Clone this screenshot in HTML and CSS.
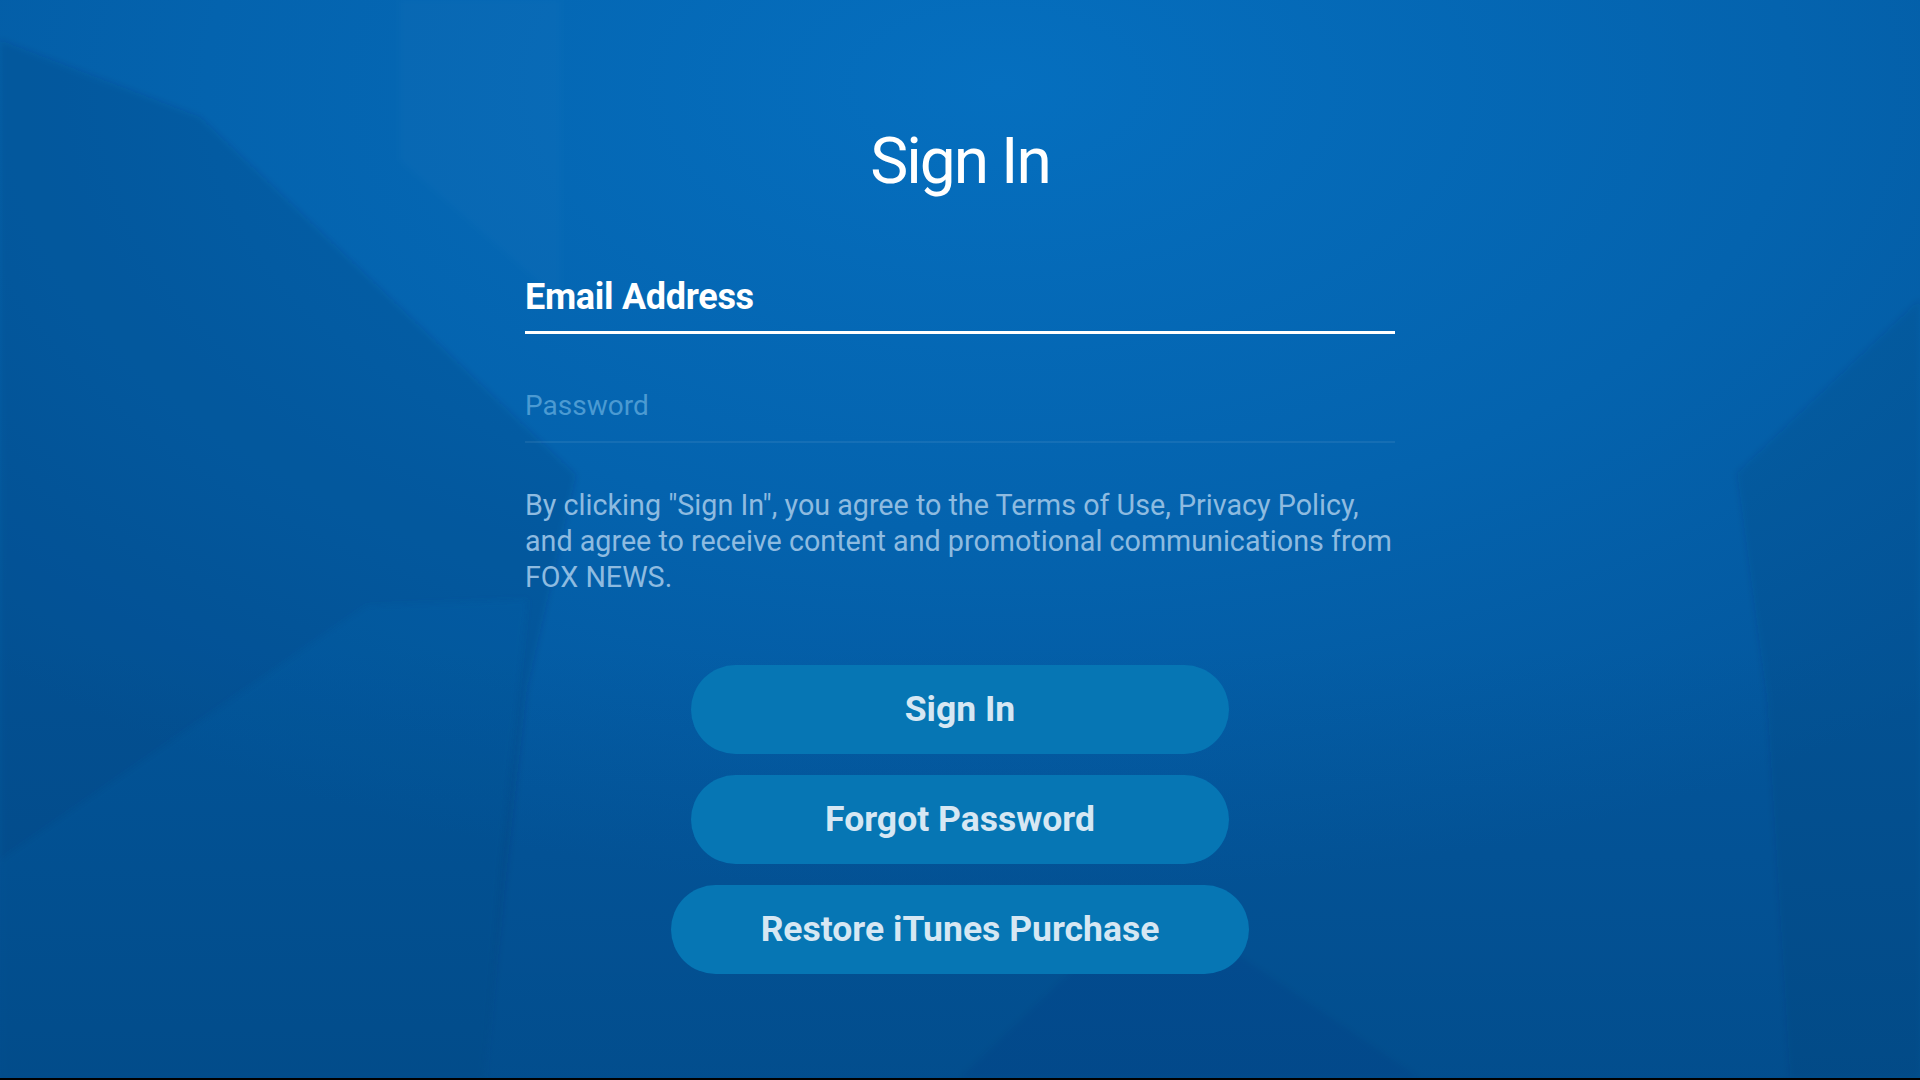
FILE: index.html
```html
<!DOCTYPE html>
<html lang="en">
<head>
<meta charset="utf-8">
<title>Sign In</title>
<link rel="stylesheet" href="styles.css">
</head>
<body>
<div class="screen">
  <svg class="backdrop" viewBox="0 0 1920 1078" preserveAspectRatio="none" aria-hidden="true">
    <defs>
      <radialGradient id="glow" cx="0.52" cy="0.08" r="0.75">
        <stop offset="0" stop-color="#056fbf"/>
        <stop offset="0.55" stop-color="#0463ae"/>
        <stop offset="1" stop-color="#03569c"/>
      </radialGradient>
      <linearGradient id="fade" x1="0" y1="0" x2="0" y2="1">
        <stop offset="0.6" stop-color="#00305a" stop-opacity="0"/>
        <stop offset="1" stop-color="#00305a" stop-opacity="0.22"/>
      </linearGradient>
      <filter id="soft" x="-5%" y="-5%" width="110%" height="110%">
        <feGaussianBlur stdDeviation="3"/>
      </filter>
    </defs>
    <rect width="1920" height="1078" fill="url(#glow)"/>
    <g filter="url(#soft)">
      <polygon points="0,40 200,117 576,475 527,689 484,1078 0,1078" fill="#002a55" fill-opacity="0.15"/>
      <polygon points="0,861 367,606 527,600 500,860 484,1078 0,1078" fill="#1a78c8" fill-opacity="0.12"/>
      <polygon points="1920,299 1737,473 1767,700 1790,1078 1920,1078" fill="#002a55" fill-opacity="0.12"/>
      <polygon points="1150,895 1420,1078 960,1078" fill="#002a55" fill-opacity="0.07"/>
      <polygon points="400,0 560,0 560,300 400,160" fill="#ffffff" fill-opacity="0.015"/>
    </g>
    <rect width="1920" height="1078" fill="url(#fade)"/>
  </svg>

  <main class="panel">
    <h1 class="title">Sign In</h1>

    <div class="field field-active">
      <span class="field-label">Email Address</span>
    </div>

    <div class="field field-idle">
      <span class="field-placeholder">Password</span>
    </div>

    <p class="terms">By clicking "Sign In", you agree to the Terms of Use, Privacy Policy,<br>and agree to receive content and promotional communications from<br>FOX NEWS.</p>

    <div class="actions">
      <button class="pill">Sign In</button>
      <button class="pill">Forgot Password</button>
      <button class="pill pill-wide">Restore iTunes Purchase</button>
    </div>
  </main>
</div>
</body>
</html>
```

FILE: styles.css
```css
html, body {
  margin: 0;
  padding: 0;
  background: #000;
}

body {
  width: 1920px;
  height: 1080px;
  overflow: hidden;
  font-family: Roboto, "Liberation Sans", sans-serif;
}

.screen {
  position: relative;
  width: 1920px;
  height: 1078px;
  overflow: hidden;
}

.backdrop {
  position: absolute;
  inset: 0;
  width: 100%;
  height: 100%;
  z-index: 0;
}

.panel {
  position: relative;
  z-index: 1;
  width: 870px;
  margin: 0 auto;
  padding-top: 124px;
  display: flex;
  flex-direction: column;
}

.title {
  margin: 0;
  font-size: 64px;
  line-height: 76px;
  font-weight: 400;
  letter-spacing: -2px;
  color: #ffffff;
  text-align: center;
}

.field {
  display: flex;
  align-items: flex-end;
}

.field-active {
  margin-top: 75px;
  padding-bottom: 12px;
  border-bottom: 3px solid #ffffff;
}

.field-label {
  font-size: 36px;
  line-height: 44px;
  font-weight: 700;
  color: #ffffff;
  letter-spacing: -0.3px;
}

.field-idle {
  margin-top: 54px;
  padding-bottom: 17px;
  border-bottom: 2px solid rgba(255, 255, 255, 0.07);
}

.field-placeholder {
  font-size: 28px;
  line-height: 36px;
  font-weight: 400;
  color: #4b9ad2;
}

.terms {
  margin: 44px 0 0;
  font-size: 28.7px;
  line-height: 36px;
  font-weight: 400;
  color: #8ebbe0;
  white-space: nowrap;
}

.actions {
  margin-top: 70px;
  display: flex;
  flex-direction: column;
  align-items: center;
  gap: 21px;
}

.pill {
  width: 538px;
  height: 89px;
  border: 0;
  border-radius: 45px;
  background: #0676b4;
  color: #d6e7f3;
  font-family: Roboto, "Liberation Sans", sans-serif;
  font-size: 35.5px;
  font-weight: 700;
  padding: 0 0 2px;
}

.pill-wide {
  width: 578px;
}
```
